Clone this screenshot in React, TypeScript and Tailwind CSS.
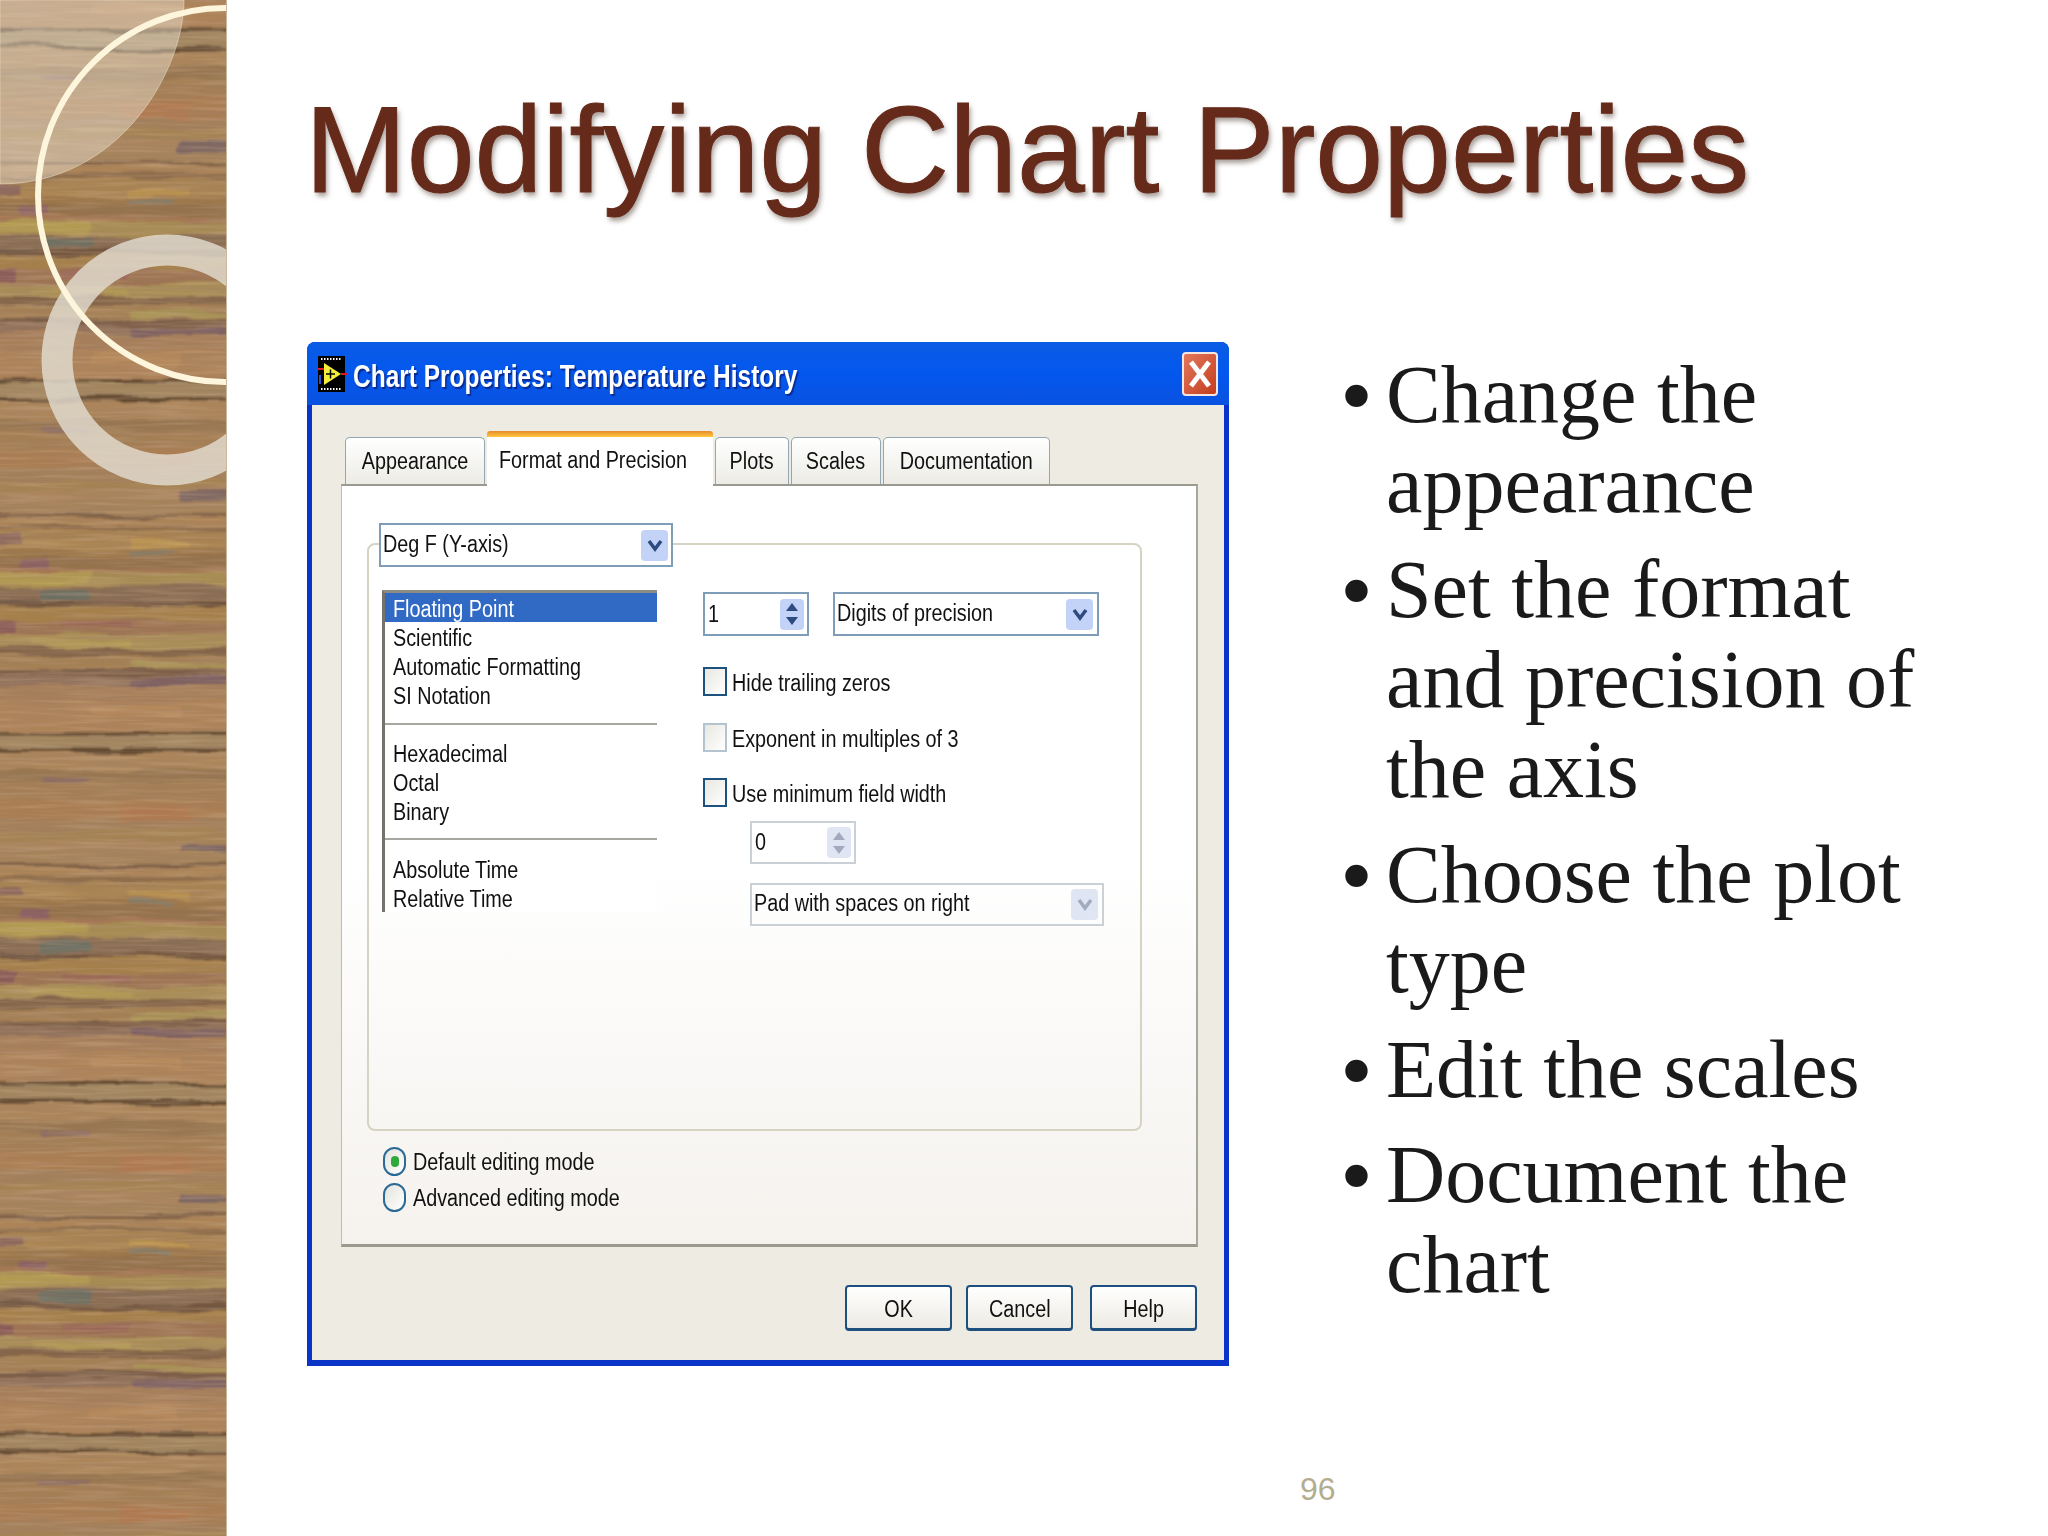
const sans = "font-['Liberation_Sans',Arial,sans-serif]"

// one repeat of the wood grain: y, height, colour
const grain: [number, number, string][] = [
  [0, 10, '#a98859'], [10, 10, '#ae8a64'], [20, 13, '#a98860'], [33, 4, '#7f6248'], [37, 9, '#b0895c'],
  [46, 4, '#8f7050'], [50, 10, '#ab8756'], [60, 8, '#b08c58'], [68, 8, '#a07c50'], [76, 12, '#96744f'],
  [88, 4, '#a87c58'], [92, 15, '#ab9258'], [107, 15, '#8a7058'], [122, 5, '#6f5540'], [127, 13, '#a98550'],
  [140, 15, '#a07858'], [155, 13, '#ae945c'], [168, 8, '#84664c'], [176, 14, '#a8855a'], [190, 6, '#7a5f4b'],
  [196, 9, '#937460'], [205, 17, '#ab8460'], [222, 28, '#b2895e'], [250, 4, '#5f4a33'], [254, 14, '#a58c66'],
  [268, 4, '#5f4a33'], [272, 18, '#b08b60'], [290, 12, '#9a7a55'], [302, 18, '#a8845a'], [320, 20, '#ae8358'],
  [340, 11, '#a78560'],
]
// partial streaks on top of the bands: x, y, width, height, colour
const streaks: [number, number, number, number, string][] = [
  [180, 12, 60, 9, '#7e6a68'], [-10, 55, 32, 10, '#8e6a62'], [130, 60, 60, 7, '#c09a52'], [130, 70, 42, 5, '#88806a'],
  [20, 79, 28, 9, '#8c6268'], [-10, 92, 100, 12, '#b8a356'], [40, 110, 52, 10, '#6b7268'], [-10, 141, 26, 12, '#8a5a5c'],
  [60, 142, 70, 7, '#9e6a5c'], [30, 160, 100, 6, '#b8a05a'], [130, 198, 110, 8, '#7d6268'], [130, 183, 100, 6, '#ac9a5a'],
  [40, 298, 50, 6, '#8e7068'], [120, 325, 70, 16, '#b47e55'], [-10, 120, 50, 4, '#6f5a48'], [90, 226, 90, 10, '#bc9062'],
]
const repeats = [-222, 129, 480, 831, 1182, 1533]

function Wood() {
  return (
    <svg width="227" height="1536" viewBox="0 0 227 1536" className="block">
      <defs>
        <filter id="wobble" filterUnits="userSpaceOnUse" x="-30" y="-30" width="290" height="1600">
          <feTurbulence type="fractalNoise" baseFrequency="0.012 0.05" numOctaves="3" seed="4" result="n" />
          <feDisplacementMap in="SourceGraphic" in2="n" scale="13" xChannelSelector="R" yChannelSelector="G" />
          <feGaussianBlur stdDeviation="1" />
        </filter>
        <filter id="dark" x="0" y="0" width="100%" height="100%">
          <feTurbulence type="fractalNoise" baseFrequency="0.012 0.22" numOctaves="3" seed="7" />
          <feColorMatrix values="0 0 0 0 0.34  0 0 0 0 0.22  0 0 0 0 0.14  1.6 0 0 0 -0.62" />
          <feGaussianBlur stdDeviation="0.6" />
        </filter>
        <filter id="light" x="0" y="0" width="100%" height="100%">
          <feTurbulence type="fractalNoise" baseFrequency="0.015 0.28" numOctaves="2" seed="21" />
          <feColorMatrix values="0 0 0 0 0.82  0 0 0 0 0.62  0 0 0 0 0.44  1.6 0 0 0 -0.68" />
          <feGaussianBlur stdDeviation="0.6" />
        </filter>
      </defs>
      <g filter="url(#wobble)">
        {repeats.map(start =>
          grain.map(([y, h, c]) => <rect key={`${start}-${y}`} x="-30" y={start + y} width="290" height={h + 1} fill={c} />)
        )}
        {repeats.map(start =>
          streaks.map(([x, y, w, h, c]) => <rect key={`s${start}-${x}-${y}`} x={x} y={start + y} width={w} height={h} rx="3" fill={c} />)
        )}
      </g>
      <rect width="227" height="1536" filter="url(#dark)" opacity="0.42" />
      <rect width="227" height="1536" filter="url(#light)" opacity="0.35" />
      <rect width="227" height="1536" fill="#8a5a30" fillOpacity="0.1" />
      <path d="M0 0H184C184 70 120 184 0 184Z" fill="#efe6d8" fillOpacity="0.42" stroke="#f0e4cc" strokeOpacity="0.5" />
      <circle cx="167" cy="360" r="110" fill="none" stroke="#e2dccf" strokeOpacity="0.82" strokeWidth="31" />
      <circle cx="225" cy="195" r="187" fill="none" stroke="#fdf6dc" strokeWidth="6" />
      <rect x="226" width="1" height="1536" fill="#c9b79c" />
    </svg>
  )
}

function Txt({ children, className = '' }: { children: React.ReactNode; className?: string }) {
  return <span className={`inline-block scale-x-[0.86] whitespace-nowrap text-[23px] leading-[29px] text-[#111] ${className || 'origin-left'}`}>{children}</span>
}

function ViIcon() {
  return (
    <svg width="31" height="36" viewBox="0 0 31 36" className="shrink-0">
      <rect x="1" width="27" height="36" fill="#000" />
      <path d="M4 3h21M4 33h21" stroke="#fff" strokeWidth="2" strokeDasharray="1.500 1.500" />
      <path d="M7 7v22l17-11z" fill="#f4ee3a" />
      <path d="M9 18h9M13.500 13.500v9" stroke="#000" strokeWidth="1.500" />
      <path d="M0 13h7" stroke="#e01818" strokeWidth="2" />
      <path d="M3 19v9" stroke="#2a4fd8" strokeWidth="2" />
      <path d="M24 18h7" stroke="#e01818" strokeWidth="2" />
    </svg>
  )
}

function Chevron({ muted = false }: { muted?: boolean }) {
  return (
    <span className={`flex h-[31px] w-[27px] items-center justify-center rounded-sm ${muted ? 'bg-[#dfe5f3]' : 'bg-[#c3d3f8]'}`}>
      <svg width="16" height="15" viewBox="0 0 16 15">
        <path d="M2 3l6 8 6-8" fill="none" stroke={muted ? '#a2abbe' : '#2e4a80'} strokeWidth="3.500" />
      </svg>
    </span>
  )
}

function Spin({ muted = false }: { muted?: boolean }) {
  const c = muted ? '#a2abbe' : '#2e4a80'
  return (
    <span className={`flex h-[31px] w-[24px] flex-col items-center justify-center gap-[4px] rounded-sm ${muted ? 'bg-[#dfe5f3]' : 'bg-[#c3d3f8]'}`}>
      <svg width="14" height="10" viewBox="0 0 14 10"><path d="M1 9l6-8 6 8z" fill={c} /></svg>
      <svg width="14" height="10" viewBox="0 0 14 10"><path d="M1 1l6 8 6-8z" fill={c} /></svg>
    </span>
  )
}

function Check({ label, disabled = false, className = '' }: { label: string; disabled?: boolean; className?: string }) {
  return (
    <div className={`flex h-[29px] items-center gap-[5px] ${className}`}>
      <span className={`h-[29px] w-[24px] shrink-0 border-2 bg-gradient-to-br from-[#e8e7e0] to-white ${disabled ? 'border-[#b3c3cf]' : 'border-[#1c5180]'}`} />
      <Txt className={`origin-left pt-[4px] ${disabled ? 'text-[#8f8f88]' : ''}`}>{label}</Txt>
    </div>
  )
}

function Radio({ label, on = false }: { label: string; on?: boolean }) {
  return (
    <div className="flex h-[29px] items-center gap-[7px]">
      <span className="flex h-[29px] w-[23px] items-center justify-center rounded-full border-2 border-[#2a6a96] bg-gradient-to-br from-[#e4e3dc] to-white">
        {on && <span className="h-[11px] w-[8px] rounded-full bg-[#2fa83c]" />}
      </span>
      <Txt className="origin-left pt-[2px]">{label}</Txt>
    </div>
  )
}

function Tab({ label, width, active = false }: { label: string; width: string; active?: boolean }) {
  if (active) {
    return (
      <div className={`relative z-10 -mb-[2px] flex h-[55px] flex-col rounded-t-[3px] bg-white ${width}`}>
        <div className="h-[6px] rounded-t-[3px] bg-gradient-to-b from-[#e68b2c] to-[#ffc73c]" />
        <div className="flex flex-1 items-center pb-[2px] pl-[12px]"><Txt>{label}</Txt></div>
      </div>
    )
  }
  return (
    <div className={`flex h-[47px] items-center justify-center rounded-t-[5px] border border-b-0 border-[#91a7b4] bg-gradient-to-b from-white to-[#ecebe5] ${width}`}>
      <Txt className="origin-center">{label}</Txt>
    </div>
  )
}

function Button({ label, className = '' }: { label: string; className?: string }) {
  return (
    <div className={`flex h-[46px] w-[107px] items-center justify-center rounded-[4px] border-2 border-b-[3px] border-[#1f4f7f] bg-gradient-to-b from-white to-[#ecebe3] ${className}`}>
      <Txt className="origin-center pt-[3px]">{label}</Txt>
    </div>
  )
}

const rows1 = ['Scientific', 'Automatic Formatting', 'SI Notation']
const rows2 = ['Hexadecimal', 'Octal', 'Binary']
const rows3 = ['Absolute Time', 'Relative Time']

function ListBox() {
  return (
    <div className="h-[322px] w-[275px] shrink-0 border-t-[3px] border-l-[3px] border-t-[#8c8c82] border-l-[#74746c] bg-white">
      <div className="h-[29px] bg-[#316ac5] pl-[8px] pt-[2px]"><Txt className="origin-left text-white">Floating Point</Txt></div>
      <div className="flex flex-col pl-[8px] pt-[2px]">
        {rows1.map(r => <div key={r} className="h-[29px]"><Txt>{r}</Txt></div>)}
      </div>
      <div className="mt-[12px] mb-[15px] h-[2px] bg-[#a7a6a0]" />
      <div className="flex flex-col pl-[8px]">
        {rows2.map(r => <div key={r} className="h-[29px]"><Txt>{r}</Txt></div>)}
      </div>
      <div className="mt-[11px] mb-[16px] h-[2px] bg-[#a7a6a0]" />
      <div className="flex flex-col pl-[8px]">
        {rows3.map(r => <div key={r} className="h-[29px]"><Txt>{r}</Txt></div>)}
      </div>
    </div>
  )
}

function Dialog() {
  return (
    <div className={`flex h-[1024px] w-[922px] shrink-0 flex-col overflow-hidden rounded-t-[8px] bg-[#0a34c8] blur-[0.6px] ${sans}`}>
      <div className="flex h-[63px] shrink-0 items-center bg-gradient-to-b from-[#0a5ce4] via-[#0357ee] to-[#0a52e0] pl-[10px] pr-[11px]">
        <ViIcon />
        <span className="ml-[5px] mt-[4px] inline-block origin-left scale-x-[0.765] whitespace-nowrap text-[32px] font-bold text-white [text-shadow:2px_2px_1px_#0a2a90]">
          Chart Properties: Temperature History
        </span>
        <span className="ml-auto flex h-[44px] w-[36px] items-center justify-center rounded-[4px] border-2 border-[#f4e6e0] bg-gradient-to-br from-[#e2775a] to-[#c43c1c]">
          <svg width="24" height="28" viewBox="0 0 24 28"><path d="M3 2l18 24M21 2L3 26" stroke="#fff" strokeWidth="5" fill="none" /></svg>
        </span>
      </div>
      <div className="mx-[5px] mb-[6px] flex flex-1 flex-col bg-[#eeebe3] pl-[29px] pr-[26px]">
        <div className="flex h-[79px] shrink-0 items-end gap-[2px] pl-[4px]">
          <Tab label="Appearance" width="w-[140px]" />
          <Tab label="Format and Precision" width="w-[226px]" active />
          <Tab label="Plots" width="w-[74px]" />
          <Tab label="Scales" width="w-[90px]" />
          <Tab label="Documentation" width="w-[167px]" />
        </div>
        <div className="flex h-[763px] shrink-0 flex-col border-t-2 border-r-2 border-b-[3px] border-l border-t-[#9a9a90] border-r-[#a8a79e] border-b-[#9a9990] border-l-[#bdbcb2] bg-gradient-to-b from-white via-white to-[#f5f2ee] pt-[37px]">
          <div className="relative z-10 ml-[37px] flex h-[44px] w-[294px] items-center justify-between border-2 border-[#7f9db9] bg-white pl-[2px] pr-[3px]">
            <Txt className="origin-left -mt-[2px]">Deg F (Y-axis)</Txt>
            <Chevron />
          </div>
          <div className="ml-[25px] -mt-[24px] flex h-[588px] w-[775px] items-start gap-[46px] rounded-[8px] border-2 border-[#d6d3c3] pl-[13px] pt-[45px]">
            <ListBox />
            <div className="flex flex-col pt-[2px]">
              <div className="flex gap-[24px]">
                <div className="flex h-[44px] w-[106px] items-center justify-between border-2 border-[#7f9db9] bg-white pl-[3px] pr-[3px]">
                  <Txt>1</Txt>
                  <Spin />
                </div>
                <div className="flex h-[44px] w-[266px] items-center justify-between border-2 border-[#7f9db9] bg-white pl-[2px] pr-[4px]">
                  <Txt className="origin-left -mt-[2px]">Digits of precision</Txt>
                  <Chevron />
                </div>
              </div>
              <Check label="Hide trailing zeros" className="mt-[31px]" />
              <Check label="Exponent in multiples of 3" disabled className="mt-[27px]" />
              <Check label="Use minimum field width" className="mt-[26px]" />
              <div className="ml-[47px] mt-[14px] flex h-[43px] w-[106px] items-center justify-between border-2 border-[#c9d0d6] pl-[3px] pr-[3px]">
                <Txt className="origin-left text-[#8f8f88]">0</Txt>
                <Spin muted />
              </div>
              <div className="ml-[47px] mt-[19px] flex h-[43px] w-[354px] items-center justify-between border-2 border-[#c9d0d6] pl-[2px] pr-[4px]">
                <Txt className="origin-left -mt-[2px] text-[#8f8f88]">Pad with spaces on right</Txt>
                <Chevron muted />
              </div>
            </div>
          </div>
          <div className="ml-[41px] mt-[16px] flex flex-col gap-[7px]">
            <Radio label="Default editing mode" on />
            <Radio label="Advanced editing mode" />
          </div>
        </div>
        <div className="mt-[38px] flex justify-end gap-[14px] pr-[1px]">
          <Button label="OK" />
          <Button label="Cancel" />
          <Button label="Help" className="ml-[3px]" />
        </div>
      </div>
    </div>
  )
}

const bullets = [
  ['Change the', 'appearance'],
  ['Set the format', 'and precision of', 'the axis'],
  ['Choose the plot', 'type'],
  ['Edit the scales'],
  ['Document the', 'chart'],
]

export default function App() {
  return (
    <div className="flex h-[1536px] w-[2048px] overflow-hidden bg-white">
      <aside className="w-[227px] shrink-0"><Wood /></aside>
      <main className="flex min-w-0 flex-1 flex-col pl-[80px]">
        <h1 className={`-ml-[2px] mt-[80px] h-[262px] whitespace-nowrap text-[122px] leading-[141px] text-[#652a1a] [-webkit-text-stroke:1px_#652a1a] [text-shadow:2px_4px_5px_rgba(80,60,50,0.5)] ${sans}`}>
          Modifying Chart Properties
        </h1>
        <div className="flex items-start">
          <Dialog />
          <div className="ml-[115px] mt-[8px] flex flex-col gap-[15px] font-['Liberation_Serif','Times_New_Roman',serif] text-[82px] leading-[90px] text-[#1a1a1a]">
            {bullets.map(lines => (
              <div key={lines[0]} className="flex">
                <span className="-ml-[4px] w-[46px] shrink-0 text-[94px]">•</span>
                <div className="whitespace-nowrap">
                  {lines.map(l => <div key={l}>{l}</div>)}
                </div>
              </div>
            ))}
          </div>
        </div>
        <div className={`ml-[993px] mt-[103px] text-[32px] leading-[40px] text-[#b3ad8f] ${sans}`}>96</div>
      </main>
    </div>
  )
}
